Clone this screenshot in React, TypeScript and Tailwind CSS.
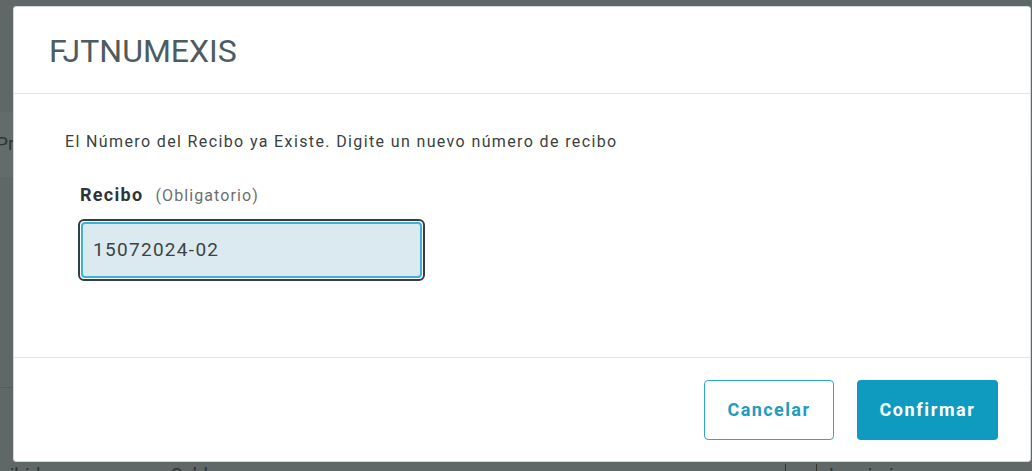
import React from "react";

export default function App() {
  return (
    <div
      className="relative w-[1032px] h-[471px] overflow-hidden bg-[#5f6767]"
      style={{ fontFamily: "Roboto, 'Noto Sans', sans-serif" }}
    >
      {/* dimmed page underneath */}
      <div className="flex flex-col h-full">
        <div className="h-[112px]" />
        <div className="h-[65px] bg-[#636b6b] flex items-center">
          <span className="-ml-[4px] text-[19px] text-[#2f3535]">Pr</span>
        </div>
        <div className="h-[210px]" />
        <div className="h-px bg-[#545c5c]" />
        <div className="flex-1 flex items-end">
          <div className="h-[9px] w-full overflow-hidden flex items-start">
            <span className="-ml-[22px] text-[19px] leading-[26px] text-[#2f3535] w-[72px]">Recibido</span>
            <span className="ml-[121px] text-[19px] leading-[26px] text-[#2f3535]">Saldo</span>
            <div className="ml-[566px] w-px h-[26px] bg-[#2f3535] mt-[2px]" />
            <div className="ml-[30px] w-px h-[26px] bg-[#2f3535] mt-[2px]" />
            <span className="ml-[12px] text-[19px] leading-[26px] text-[#2f3535]">Imprimir</span>
          </div>
        </div>
      </div>

      {/* modal */}
      <div className="absolute left-[13px] top-[6px] w-[1018px] h-[456px] bg-white border border-[#d3d8d8] rounded-[3px] flex flex-col">
        <div className="h-[87px] flex items-center pl-[35px] border-b border-[#e1e4e4]">
          <h1 className="text-[32px] leading-none text-[#4d5c60] pt-[1px]">FJTNUMEXIS</h1>
        </div>
        <div className="flex-1 pl-[51px] pt-[38px] border-b border-[#e1e4e4]">
          <p className="text-[16px] leading-[20px] tracking-[1.37px] text-[#3a3f40]">
            El Número del Recibo ya Existe. Digite un nuevo número de recibo
          </p>
          <div className="pl-[15px] pt-[29px]">
            <div className="flex items-baseline gap-[12px]">
              <span className="text-[18px] font-bold tracking-[1.3px] text-[#2f3436]">Recibo</span>
              <span className="text-[16px] tracking-[1.1px] text-[#6a6f70]">(Obligatorio)</span>
            </div>
            <div className="mt-[11px] -ml-[2px] w-[347px] h-[62px] rounded-[6px] border-[2px] border-[#2f4048] p-px">
              <div className="h-full rounded-[4px] border-[2px] border-[#3fb2d3] bg-[#dbe9f0] flex items-center pl-[10px]">
                <span className="text-[19px] tracking-[1.3px] text-[#3d4344]">15072024-02</span>
              </div>
            </div>
          </div>
        </div>
        <div className="h-[103px] flex items-center justify-end gap-[23px] pr-[32px]">
          <button className="w-[130px] h-[60px] rounded-[4px] border border-[#2aa7c9] text-[#1f9cbf] text-[18px] tracking-[1.4px] font-bold bg-white">
            Cancelar
          </button>
          <button className="w-[141px] h-[60px] rounded-[4px] bg-[#0f9bbf] text-white text-[18px] tracking-[1.6px] font-bold">
            Confirmar
          </button>
        </div>
      </div>
    </div>
  );
}
